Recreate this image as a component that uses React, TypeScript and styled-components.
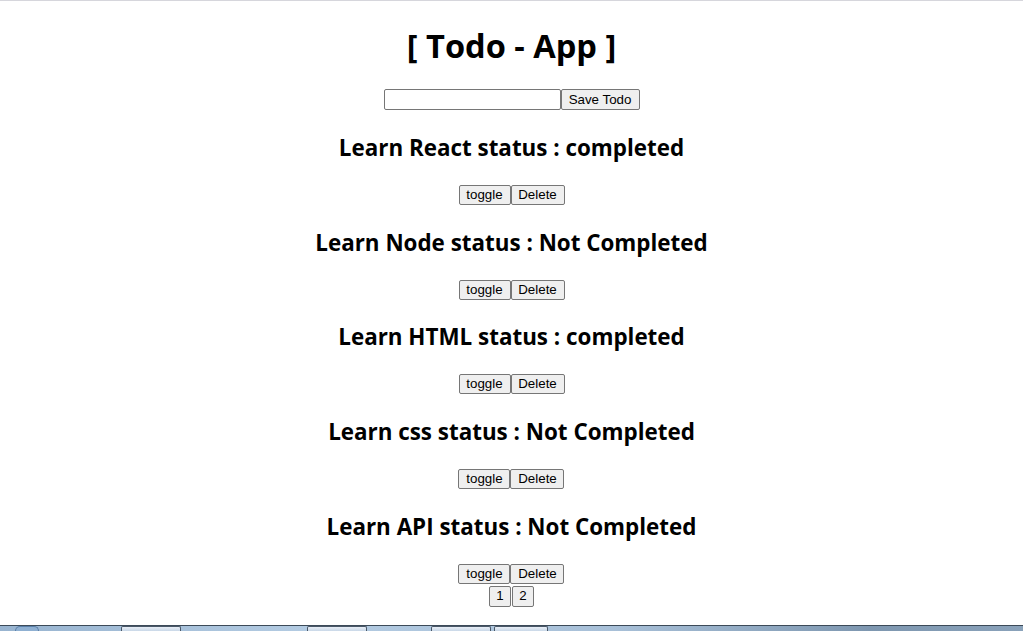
import React, { useState } from "react";
import styled, { createGlobalStyle } from "styled-components";

const Global = createGlobalStyle`
  html, body { margin: 0; padding: 0; background: #fff; }
  body { font-family: "Open Sans", "Noto Sans", sans-serif; color: #000; }
`;

const Page = styled.div`
  height: 631px;
  display: flex;
  flex-direction: column;
  border-top: 1px solid #d6d6dc;
  box-sizing: border-box;
  overflow: hidden;
`;

const Main = styled.main`
  flex: 1;
  display: flex;
  flex-direction: column;
  align-items: center;
  text-align: center;
`;

const Title = styled.h1`
  margin: 25px 0 0;
  font-size: 32.6px;
  line-height: 40px;
  font-weight: 700;
`;

const Form = styled.div`
  margin-top: 23px;
  display: flex;
  height: 21px;
`;

const Input = styled.input`
  width: 177px;
  height: 21px;
  box-sizing: border-box;
  border: 1px solid #767676;
  border-radius: 2px;
  padding: 1px 2px;
  font: 13.33px "Liberation Sans", Arial, sans-serif;
  outline: none;
`;

const Btn = styled.button<{ $w?: number }>`
  height: ${(p) => (p.$w ? 20 : 21)}px;
  box-sizing: border-box;
  padding: 0 6px;
  border: 1px solid #767676;
  border-radius: 2px;
  background: #efefef;
  color: #000;
  font: 13.33px "Liberation Sans", Arial, sans-serif;
  line-height: 18px;
  cursor: pointer;
  ${(p) => (p.$w ? `width: ${p.$w}px;` : "")}
`;

const SaveBtn = styled(Btn)`
  width: 79px;
  padding: 0;
`;

const Item = styled.section`
  display: flex;
  flex-direction: column;
  align-items: center;
`;

const ItemTitle = styled.h2`
  margin: 21.75px 0 0;
  font-size: 22.4px;
  line-height: 32px;
  font-weight: 700;
`;

const Actions = styled.div`
  margin-top: 21px;
  display: flex;
`;

const Pager = styled.div`
  margin-top: 2px;
  display: flex;
  gap: 1px;
`;

const PageBtn = styled(Btn)`
  width: 22px;
  padding: 0;
`;

const Taskbar = styled.div`
  height: 5px;
  flex-shrink: 0;
  border-top: 1px solid #3c4a58;
  background: linear-gradient(90deg, #98b4d0 0%, #b3cbe2 30%, #a8c0d8 60%, #7e97b0 85%, #8aa2ba 100%);
  display: flex;
  align-items: stretch;
`;

const Orb = styled.span`
  margin-left: 15px;
  width: 22px;
  border: 1px solid #5a7fa8;
  border-bottom: none;
  border-radius: 11px 11px 0 0;
  background: #8fb0d2;
`;

const Tab = styled.span<{ $x: number; $w: number }>`
  margin-left: ${(p) => p.$x}px;
  width: ${(p) => p.$w}px;
  box-sizing: border-box;
  border: 1px solid #4a5868;
  border-bottom: none;
  border-radius: 2px 2px 0 0;
  background: linear-gradient(180deg, #e8eef6, #c9d8e8);
`;

const todos = [
  { text: "Learn React", done: true },
  { text: "Learn Node", done: false },
  { text: "Learn HTML", done: true },
  { text: "Learn css", done: false },
  { text: "Learn API", done: false },
];

export default function App() {
  const [list, setList] = useState(todos);
  const [value, setValue] = useState("");
  return (
    <>
      <Global />
      <Page>
        <Main>
          <Title>[ Todo - App ]</Title>
          <Form>
            <Input value={value} onChange={(e) => setValue(e.target.value)} />
            <SaveBtn>Save Todo</SaveBtn>
          </Form>
          {list.map((t, i) => (
            <Item key={t.text}>
              <ItemTitle>
                {t.text} status : {t.done ? "completed" : "Not Completed"}
              </ItemTitle>
              <Actions>
                <Btn
                  $w={52}
                  onClick={() =>
                    setList(list.map((x, j) => (j === i ? { ...x, done: !x.done } : x)))
                  }
                >
                  toggle
                </Btn>
                <Btn $w={54} onClick={() => setList(list.filter((_, j) => j !== i))}>
                  Delete
                </Btn>
              </Actions>
            </Item>
          ))}
          <Pager>
            <PageBtn>1</PageBtn>
            <PageBtn>2</PageBtn>
          </Pager>
        </Main>
        <Taskbar>
          <Orb />
          <Tab $x={82} $w={60} />
          <Tab $x={126} $w={60} />
          <Tab $x={64} $w={60} />
          <Tab $x={3} $w={54} />
        </Taskbar>
      </Page>
    </>
  );
}
